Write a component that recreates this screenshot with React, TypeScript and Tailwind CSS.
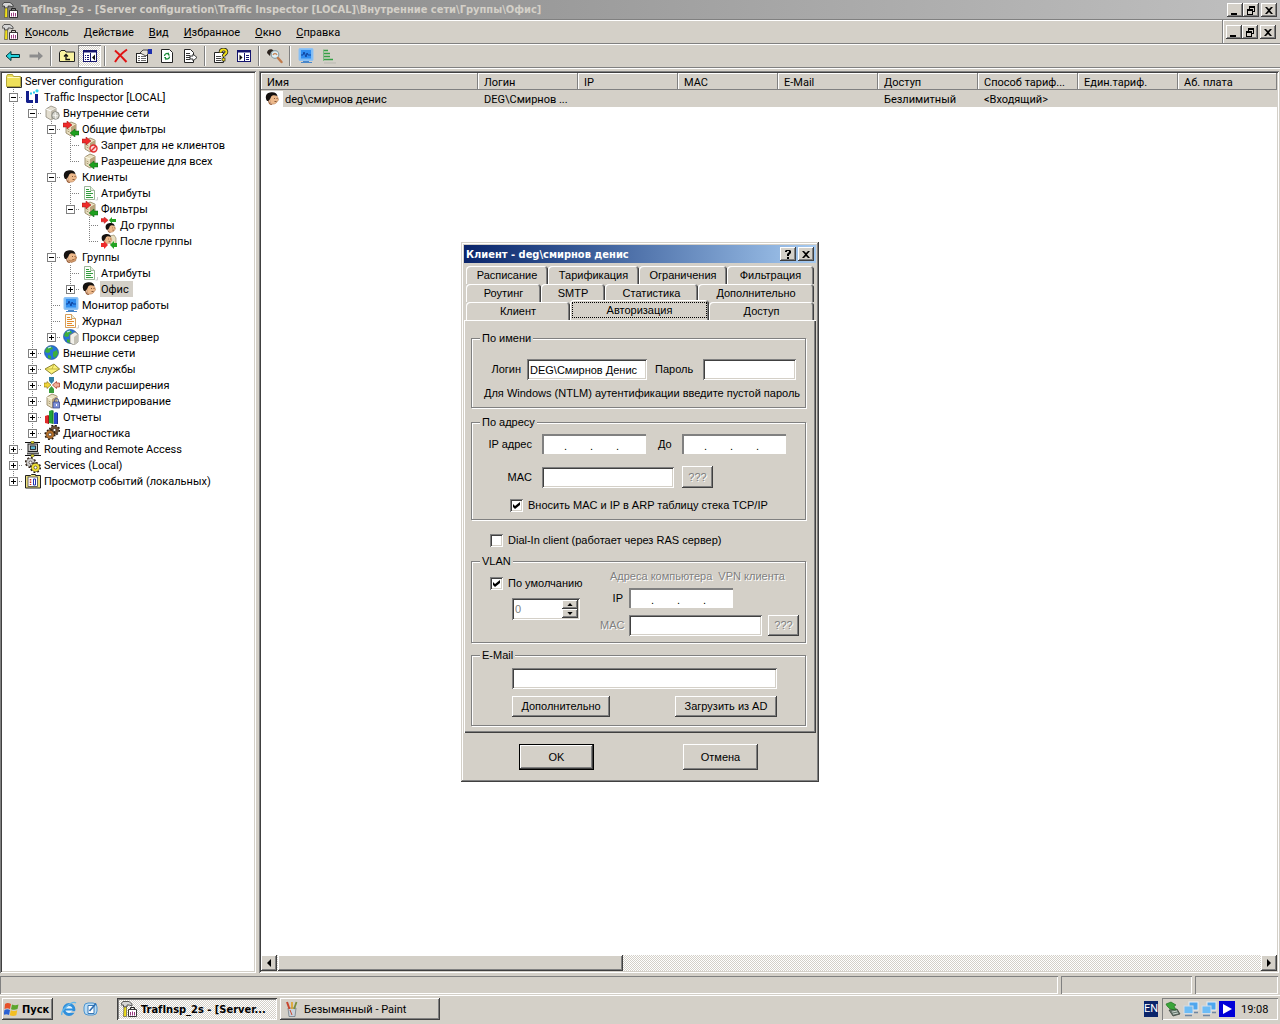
import React from "react";
import clsx from "clsx";

const raised =
  "bg-[#d4d0c8] shadow-[inset_-1px_-1px_0_#404040,inset_1px_1px_0_#fff,inset_-2px_-2px_0_#808080]";
const sunken =
  "bg-white shadow-[inset_1px_1px_0_#808080,inset_-1px_-1px_0_#fff,inset_2px_2px_0_#404040,inset_-2px_-2px_0_#d4d0c8]";
const thinSunken = "shadow-[inset_1px_1px_0_#808080,inset_-1px_-1px_0_#fff]";
const dither =
  "bg-[repeating-conic-gradient(#ffffff_0_25%,#d4d0c8_0_50%)] bg-[length:2px_2px]";
const boldFont = "font-['DejaVu_Sans_Condensed','DejaVu_Sans',sans-serif] font-bold";

/* ---------- icons ---------- */

function Svg({ children, className }: { children: React.ReactNode; className?: string }) {
  return (
    <svg viewBox="0 0 16 16" className={clsx("h-4 w-4 shrink-0", className)} aria-hidden="true">
      {children}
    </svg>
  );
}

const Box = () => (
  <>
    <path d="M3 4 8 1l5 2v9l-5 3-5-3z" fill="#e8dfc0" stroke="#8d7c58" strokeWidth=".8" />
    <path d="M3 4l5 2 5-3" fill="none" stroke="#fffbe8" />
    <path d="M8 6v9l5-3V3z" fill="#b9a37a" />
    <path d="M4.500 8l2 1M4.500 10l2 1" stroke="#9c8b66" strokeWidth=".8" />
  </>
);
const RedArrow = () => <path d="M0 2h4V0l5 4-5 4V6H0z" fill="#ee2b2b" stroke="#a31212" strokeWidth=".5" />;
const GreenArrow = () => <path d="M16 10h-4V8l-5 4 5 4v-2h4z" fill="#1fa01f" stroke="#0b5d12" strokeWidth=".5" />;
const Head = () => (
  <>
    <path d="M4 5c3-2 8-2 9 2l.500 2-1 1c-1 3-5 4-7 2z" fill="#edb98b" stroke="#b3784c" strokeWidth=".6" />
    <path d="M4.500 8c-1 3 1 5 3 5l-1 1c-2 0-3.500-2-3.500-5z" fill="#9a5d34" />
    <path d="M2 10C-.500 6 1 2 5 1.500c4-1 7 .5 7.500 3.500-3-1.500-6-1-6.500 1-.500 1-1 3-3 4z" fill="#15110f" />
    <path d="M9 7.500h1M11.500 7.500h1M9.500 10.500h2" stroke="#6b3f22" strokeWidth=".8" />
  </>
);
const Sheet = ({ stroke, line }: { stroke: string; line: string }) => (
  <>
    <path d="M2.500 1.500h6l4 4v9h-10z" fill="#fbfdf9" stroke={stroke} strokeWidth=".9" />
    <path d="M8.500 1.500v4h4" fill="#e5efe0" stroke={stroke} strokeWidth=".8" />
    <path d="M4 4.500h3M4 6.500h5M4 8.500h7M4 10.500h5M4 12.500h7" stroke={line} strokeWidth="1.200" />
    <path d="M13.500 15h2v-3" fill="none" stroke="#cfcfcf" />
  </>
);
const Screen = () => (
  <>
    <rect x="1" y="0.500" width="14" height="12" rx="1" fill="#7fbcf5" stroke="#8fc2f4" />
    <rect x="3" y="2" width="10" height="8.500" fill="#2f8df0" />
    <path d="M3 7h2l1-3 2 5 1-4 1 2h3" fill="none" stroke="#0b3c96" strokeWidth=".9" />
    <path d="M3 14.500h11M5 13.500h6" stroke="#4a86c8" />
  </>
);
const Globe = () => (
  <>
    <circle cx="7.500" cy="7.500" r="7" fill="#2673d8" stroke="#16418f" strokeWidth=".6" />
    <path d="M2 4c2-3 5-3 6-2l1 2-3 1v2l-2 1-3-1zM9 7l4-2 1 4-3 4-2-2zM4 10l3 1v3l-3-1z" fill="#3dae3b" />
    <path d="M4 3l3-1" stroke="#bfe6ff" strokeWidth="1.200" />
  </>
);
const Gear = ({ x, y, fill }: { x: number; y: number; fill: string }) => (
  <>
    <circle cx={x} cy={y} r="4.800" fill="none" stroke="#2a1c10" strokeWidth="1.600" strokeDasharray="1.800 1.960" />
    <circle cx={x} cy={y} r="4.200" fill={fill} stroke="#2a1c10" strokeWidth=".5" />
    <circle cx={x} cy={y} r="1.500" fill="#fff" stroke="#2a1c10" strokeWidth=".6" />
  </>
);

const icons: Record<string, React.ReactNode> = {
  folder: (
    <>
      <path d="M.5 3.500l1-2h5l1 2h7v10H.500z" fill="#eee05a" stroke="#b3a63a" />
      <path d="M1.500 4.500h12" stroke="#fffbc0" />
      <path d="M1 14.500h14.500V4" fill="none" stroke="#333" />
    </>
  ),
  ti: (
    <>
      <path d="M1 2h3v9h4v3H2l-1-1z" fill="#131f8c" />
      <path d="M10 5h3v9h-3z" fill="#131f8c" />
      <path d="M5 4.500h2M8 3.500h2" stroke="#28c7e8" strokeWidth="2" />
      <circle cx="12" cy="1.800" r="1.600" fill="#28d7f0" />
    </>
  ),
  net: (
    <>
      <path d="M2 4 7 1l5 2v9l-5 3-5-3z" fill="#e2ddcf" stroke="#8f8a7c" strokeWidth=".8" />
      <path d="M2 4l5 2 5-3" fill="none" stroke="#fff" />
      <path d="M7 6v9l5-3V3z" fill="#bdb8aa" />
      <circle cx="11.500" cy="10.500" r="3.800" fill="#c9c9c1" stroke="#7b7b74" strokeWidth=".8" />
      <path d="M9 10l5 1M11 7l1 7" stroke="#f6f6f2" />
    </>
  ),
  filters: <><Box /><RedArrow /><GreenArrow /></>,
  deny: (
    <>
      <Box />
      <RedArrow />
      <circle cx="11.500" cy="11.500" r="3.500" fill="#fbd7d7" stroke="#e03030" strokeWidth="1.400" />
      <path d="M9 14l5-5" stroke="#e03030" strokeWidth="1.400" />
    </>
  ),
  allow: <><Box /><GreenArrow /></>,
  head: <Head />,
  group: <><Head /><path d="M6 11c3 1 5 0 7.500-3l-1 4-4.500 1.500z" fill="#d69b6c" stroke="#9b683f" strokeWidth=".5" /></>,
  sheet: <Sheet stroke="#8fae8c" line="#2f9b3a" />,
  journal: <Sheet stroke="#d0934a" line="#e58b2b" />,
  before: (
    <>
      <g transform="scale(.8)"><RedArrow /></g>
      <path d="M15 2h-4V0L8 3l3 4V5h4z" fill="#24a324" />
      <g transform="translate(4 5) scale(.78)"><Head /></g>
    </>
  ),
  after: (
    <>
      <path d="M9 3l4-1 2 3v6H9z" fill="#e8dfc0" stroke="#8d7c58" strokeWidth=".6" />
      <g transform="scale(.8)"><Head /></g>
      <path d="M0 10h3V8l4 4-4 4v-2H0z" fill="#ee2b2b" />
      <path d="M16 10h-3V8l-4 4 4 4v-2h3z" fill="#24a324" />
    </>
  ),
  screen: <Screen />,
  proxy: (
    <>
      <Globe />
      <path d="M7 6l5-3 3 2v8l-4 3-4-2z" fill="#f1efe9" stroke="#77746c" strokeWidth=".7" />
      <path d="M11 8v8l4-3V5z" fill="#c4c1b6" />
    </>
  ),
  globe: <Globe />,
  mail: (
    <>
      <path d="M1 8l9-5 5.500 5-8 5z" fill="#fbf27a" stroke="#7e7420" strokeWidth=".9" />
      <path d="M1 8h7l2-5M8 8l7.500 0" fill="none" stroke="#b7a932" strokeWidth=".8" />
    </>
  ),
  modules: (
    <>
      <path d="M5 0h5v4L7.500 7 5 4z" fill="#2f7fa4" />
      <path d="M5 16h5v-4L7.500 9 5 12z" fill="#3c9e3c" />
      <path d="M0 6h3V4.500L7 8l-4 3.500V10H0z" fill="#f0d43a" stroke="#806c10" strokeWidth=".6" />
      <path d="M15.500 6h-3V4.500L8.500 8l4 3.500V10h3z" fill="#f0b09a" stroke="#a5301e" strokeWidth=".7" />
    </>
  ),
  admin: (
    <>
      <Box />
      <rect x="9" y="9" width="6.500" height="6" fill="#8192d8" stroke="#2c3a85" strokeWidth=".7" />
      <path d="M10.500 9V7.500a2 2 0 0 1 4 0V9" fill="none" stroke="#4a568f" />
      <path d="M12.500 11v2" stroke="#fff" />
    </>
  ),
  reports: (
    <>
      <path d="M1 7l3-1 1 1v8l-4-1z" fill="#e02a2a" />
      <path d="M5 2l3-1 1.500 1v13L5 14z" fill="#23a33a" />
      <path d="M10 4l2-1 2 1v11h-4z" fill="#2b49d2" />
      <path d="M4.500 6v9M9 1v14M13.500 4v11" stroke="#00000055" />
    </>
  ),
  diag: <><Gear x={10.500} y={5} fill="#6d5139" /><Gear x={6} y={9.500} fill="#b4702b" /></>,
  routing: (
    <>
      <path d="M0 1.500h15M0 14.500h16" stroke="#111" />
      <path d="M6 0h3v3H6zM6 13h3v3H6z" fill="#d9d021" stroke="#555" strokeWidth=".5" />
      <rect x="3" y="3" width="9.500" height="7.500" fill="#c6c6c6" stroke="#222" />
      <rect x="5.500" y="5" width="5" height="3.500" fill="#5fb4d0" stroke="#111" strokeWidth=".8" />
      <path d="M2 12.500h12" stroke="#555" strokeWidth="2" />
    </>
  ),
  services: <><Gear x={5.500} y={5.500} fill="#d0d0d0" /><Gear x={10.500} y={10.500} fill="#efe135" /></>,
  events: (
    <>
      <path d="M.5 2.500h5l1-1h4v1h5V15H.500z" fill="#efe27e" stroke="#222" />
      <rect x="3" y="4" width="9.500" height="9.500" fill="#fff" stroke="#444" strokeWidth=".8" />
      <path d="M5.500 6v6" stroke="#d02020" strokeWidth="1.500" strokeDasharray="1.500 1" />
      <path d="M8.500 6h2v6h-2z" fill="none" stroke="#2030b0" />
    </>
  ),
  mmc: (
    <>
      <path d="M0 3l2-2.500h6l3 2.500v2L8 4H6v2H2.500V4H0z" fill="#d5d5d5" stroke="#222" strokeWidth=".7" />
      <path d="M3 6h2.500v9.500H2.500z" fill="#f1e019" stroke="#444" strokeWidth=".6" />
      <path d="M7.500 8.500h8v7h-8z" fill="#fff" stroke="#222" strokeWidth=".9" />
      <path d="M9.500 8V6.500h4V8" fill="none" stroke="#222" />
      <path d="M9.500 14.500V11M11.500 14.500v-4M13.500 14.500V11" stroke="#9a3a80" />
    </>
  ),
  back: <path d="M1 8l5-4.500V6.500h8.500v3H6v3z" fill="#21d3dd" stroke="#08363a" />,
  forward: <path d="M15 8l-5-4.500V6.500H1.500v3H10v3z" fill="#8d8d8d" />,
  up: (
    <>
      <path d="M.5 4.500l1.500-2h4l1 1.500h8.500v9.500H.5z" fill="#f9f3a0" stroke="#222" />
      <path d="M11 11.500H7V7M5 8.500l2-2 2 2" fill="none" stroke="#111" strokeWidth="1.300" />
    </>
  ),
  panes: (
    <>
      <rect x="1.500" y="2.500" width="13" height="11" fill="#fff" stroke="#14146e" />
      <path d="M1 3.500h14" stroke="#14146e" strokeWidth="2" />
      <path d="M8.500 5v9" stroke="#14146e" />
      <path d="M3 7.500h4M3 9.500h4M3 11.500h4" stroke="#14146e" strokeDasharray="1 1 3" />
      <path d="M13 6.500v6L10 9.500z" fill="#111" />
    </>
  ),
  remove: <path d="M2 2.500C6 6 10 10 13.500 14M14 1.500C9 5 5 9 2 14" fill="none" stroke="#e01414" strokeWidth="2" />,
  props: (
    <>
      <rect x=".5" y="5.500" width="11" height="9" fill="#fff" stroke="#222" />
      <path d="M2 8.500h2M5 8.500h5M2 10.500h2M5 10.500h5M2 12.500h2M5 12.500h5" stroke="#444" strokeWidth=".8" />
      <path d="M4 5l3-3h5v4l-2 2-2-1-2-1z" fill="#e6e2d8" stroke="#222" strokeWidth=".8" />
      <path d="M12 1h4v5h-4z" fill="#1d2fae" />
    </>
  ),
  refresh: (
    <>
      <path d="M2.500 1.500h8l3 3v10h-11z" fill="#fff" stroke="#222" />
      <path d="M5.500 8a2.500 2.500 0 0 1 4-2M10.500 8.500a2.500 2.500 0 0 1-4 2" fill="none" stroke="#178a35" strokeWidth="1.300" />
      <path d="M9 4v3.500h2zM7 12.500V9H5z" fill="#178a35" />
    </>
  ),
  exportList: (
    <>
      <path d="M2.500 1.500h6l3 3v10h-9z" fill="#fff" stroke="#222" />
      <path d="M4 5.500h4M4 7.500h4M4 9.500h4M4 11.500h4" stroke="#333" />
      <path d="M8 8h3V6l4 3.500L11 13v-2H8z" fill="#fff" stroke="#222" strokeWidth=".9" />
    </>
  ),
  help: (
    <>
      <path d="M1.500 4.500h9v10h-9z" fill="#fff" stroke="#222" />
      <path d="M3 8.500h5M3 10.500h5M3 12.500h5" stroke="#444" />
      <path d="M7.500 4.500c0-4 6-4 6-.5 0 2-3 2-3 4.500" fill="none" stroke="#222" strokeWidth="3.600" />
      <path d="M7.500 4.500c0-4 6-4 6-.5 0 2-3 2-3 4.500" fill="none" stroke="#f1e019" strokeWidth="2" />
      <rect x="9" y="10" width="3" height="3" fill="#f1e019" stroke="#222" strokeWidth=".7" />
    </>
  ),
  panesRight: (
    <>
      <rect x="1.500" y="2.500" width="13" height="11" fill="#fff" stroke="#14146e" />
      <path d="M1 3.500h14" stroke="#14146e" strokeWidth="2" />
      <path d="M8.500 5v9" stroke="#14146e" />
      <path d="M10 7.500h3M10 9.500h3M10 11.500h3" stroke="#14146e" />
      <path d="M3.500 6.500v6L6.500 9.500z" fill="#111" />
    </>
  ),
  find: (
    <>
      <path d="M0 5c0-4 5-5 7-2l-3 1-1 4z" fill="#2a211c" />
      <circle cx="8" cy="6.500" r="3.800" fill="#dff0f6" stroke="#8aa0a8" strokeWidth="1.200" />
      <path d="M6 7c1-2 3-2 4 0" fill="none" stroke="#c98b60" strokeWidth="1.500" />
      <path d="M11 10l3.500 4" stroke="#c07a4b" strokeWidth="2.400" strokeLinecap="round" />
    </>
  ),
  greenList: (
    <>
      <path d="M3 15h12" stroke="#b9b9b1" />
      <path d="M2 2.500h5M2 5.500h7M2 8.500h7M2 11.500h10" stroke="#35a045" strokeWidth="1.600" />
      <path d="M2.500 2v11" stroke="#7dbb84" />
    </>
  ),
  windows: (
    <>
      <path d="M1 3c2-1.500 4-1 6 0L6 8C4 7 2.500 7 .5 8z" fill="#e5502a" />
      <path d="M8 3.500c2 1 4 1 6.500 0L13.500 8c-2 1-4 1-6.500.2z" fill="#5ba52d" />
      <path d="M.5 9c2-1 3.500-1 5.500 0l-1 5c-2-1-3.500-1-5.500 0z" fill="#2b62d3" />
      <path d="M6.800 9.300c2 .8 4 .8 6.500 0l-1 5c-2 1-4.500 1-6.500 0z" fill="#f2be22" />
    </>
  ),
  ie: (
    <>
      <circle cx="8" cy="8.500" r="5" fill="#e4f3fd" stroke="#2f8fdc" strokeWidth="2.800" />
      <path d="M4 8.500h9" stroke="#2f8fdc" strokeWidth="2" />
      <path d="M10 11h5" stroke="#d4d0c8" strokeWidth="1.600" />
      <path d="M1 14C-1 10 11-1 15 2" fill="none" stroke="#62b6ea" strokeWidth="1.400" />
    </>
  ),
  desktop: (
    <>
      <rect x="1" y="2" width="13" height="12" rx="4" fill="#b9dcf5" stroke="#4d94cf" />
      <path d="M5 4.500h6v8H5z" fill="#fff" stroke="#3a78b4" />
      <path d="M6.500 10L13 2.500" stroke="#2b6cb0" strokeWidth="1.600" />
    </>
  ),
  paint: (
    <>
      <path d="M4 7h8l-1 8.500H5z" fill="#c9d3dc" stroke="#66717b" strokeWidth=".7" />
      <path d="M5.500 8L3 1" stroke="#c8452e" strokeWidth="2" />
      <path d="M8 8V1" stroke="#e2a11e" strokeWidth="1.600" />
      <path d="M10 8l2.500-7" stroke="#7c8c3a" strokeWidth="1.800" />
      <path d="M6 9l2 5" stroke="#c8452e" />
    </>
  ),
  modem: (
    <>
      <path d="M4 9l8-1 3 5-7 2z" fill="#6a7a70" stroke="#2b332e" strokeWidth=".7" />
      <path d="M1 3l5-2 5 3-2 1 2 4-6-1-3-3z" fill="#3aa53a" stroke="#18661a" strokeWidth=".6" />
      <path d="M7 11l5-1M8 13l5-1" stroke="#e5ebe6" strokeWidth=".8" />
    </>
  ),
  lan: (
    <>
      <rect x="6" y="1" width="9" height="8" fill="#4ea6ee" stroke="#e5edf5" />
      <rect x="1" y="5" width="9" height="7.500" fill="#6cbcf6" stroke="#d3dce6" />
      <path d="M2 14.500h7M11 11.500h4" stroke="#6f87a3" strokeWidth="1.600" />
    </>
  ),
  play: (
    <>
      <rect width="16" height="16" fill="#0000d8" />
      <path d="M4 3l9 5-9 5z" fill="#fff" />
    </>
  ),
};

function Icon({ name, className }: { name: string; className?: string }) {
  return <Svg className={className}>{icons[name]}</Svg>;
}

/* ---------- window buttons ---------- */

const glyphs: Record<string, React.ReactNode> = {
  min: <path d="M3 9h6v2H3z" />,
  restore: <path d="M5 2h6v6H9v3H3V5h2zM6 4v1h3v2h1V4zM4 7v3h4V7z" fillRule="evenodd" />,
  close: <path d="M3 3h2l2 2 2-2h2L8 6.500 11 10H9L7 8l-2 2H3l3-3.500z" />,
  help: <path d="M4 4V3l1-1h4l1 1v2L8 7v1H6V6l2-2V3H6v1zM6 9h2v2H6z" />,
};

function WinButton({ kind, label }: { kind: string; label: string }) {
  return (
    <button aria-label={label} className={clsx(raised, "flex h-[14px] w-4 items-center justify-center")}>
      <svg viewBox="0 0 14 12" className="h-3 w-[14px]" aria-hidden="true">
        {glyphs[kind]}
      </svg>
    </button>
  );
}

function WindowControls() {
  return (
    <div className="flex">
      <WinButton kind="min" label="Свернуть" />
      <WinButton kind="restore" label="Восстановить" />
      <span className="w-0.5" />
      <WinButton kind="close" label="Закрыть" />
    </div>
  );
}

/* ---------- tree ---------- */

type Node = {
  label: string;
  icon: string;
  closed?: boolean;
  selected?: boolean;
  children?: Node[];
};

const tree: Node[] = [
  {
    label: "Traffic Inspector [LOCAL]",
    icon: "ti",
    children: [
      {
        label: "Внутренние сети",
        icon: "net",
        children: [
          {
            label: "Общие фильтры",
            icon: "filters",
            children: [
              { label: "Запрет для не клиентов", icon: "deny" },
              { label: "Разрешение для всех", icon: "allow" },
            ],
          },
          {
            label: "Клиенты",
            icon: "head",
            children: [
              { label: "Атрибуты", icon: "sheet" },
              {
                label: "Фильтры",
                icon: "filters",
                children: [
                  { label: "До группы", icon: "before" },
                  { label: "После группы", icon: "after" },
                ],
              },
            ],
          },
          {
            label: "Группы",
            icon: "group",
            children: [
              { label: "Атрибуты", icon: "sheet" },
              { label: "Офис", icon: "head", closed: true, selected: true },
            ],
          },
          { label: "Монитор работы", icon: "screen" },
          { label: "Журнал", icon: "journal" },
          { label: "Прокси сервер", icon: "proxy", closed: true },
        ],
      },
      { label: "Внешние сети", icon: "globe", closed: true },
      { label: "SMTP службы", icon: "mail", closed: true },
      { label: "Модули расширения", icon: "modules", closed: true },
      { label: "Администрирование", icon: "admin", closed: true },
      { label: "Отчеты", icon: "reports", closed: true },
      { label: "Диагностика", icon: "diag", closed: true },
    ],
  },
  { label: "Routing and Remote Access", icon: "routing", closed: true },
  { label: "Services (Local)", icon: "services", closed: true },
  { label: "Просмотр событий (локальных)", icon: "events", closed: true },
];

function Branch({ node, last }: { node: Node; last: boolean }) {
  const open = !!node.children;
  return (
    <svg viewBox="0 0 19 16" className="h-4 w-[19px] shrink-0" aria-hidden="true">
      <path d={last ? "M9.500 0v8" : "M9.500 0v16"} stroke="#808080" strokeDasharray="1 1" />
      <path d="M9 8.500h10" stroke="#808080" strokeDasharray="1 1" />
      {(open || node.closed) && (
        <>
          <rect x="5.500" y="4.500" width="8" height="8" fill="#fff" stroke="#808080" />
          <path d={open ? "M7 8.500h5" : "M7 8.500h5M9.500 6v5"} stroke="#000" />
        </>
      )}
    </svg>
  );
}

function TreeItem({ node, last, guides }: { node: Node; last: boolean; guides: boolean[] }) {
  return (
    <li role="treeitem" aria-selected={!!node.selected} aria-expanded={node.children ? true : undefined}>
      <div className="flex h-4 items-center whitespace-nowrap">
        {guides.map((on, i) => (
          <svg key={i} viewBox="0 0 19 16" className="h-4 w-[19px] shrink-0" aria-hidden="true">
            {on && <path d="M9.500 0v16" stroke="#808080" strokeDasharray="1 1" />}
          </svg>
        ))}
        <Branch node={node} last={last} />
        <Icon name={node.icon} className="ml-0.5" />
        <span className={clsx("ml-0.5 h-4 px-px leading-[18px]", node.selected && "bg-[#d4d0c8] pr-1")}>
          {node.label}
        </span>
      </div>
      {node.children && (
        <ul role="group">
          {node.children.map((child, i) => (
            <TreeItem
              key={child.label}
              node={child}
              last={i === node.children!.length - 1}
              guides={[...guides, !last]}
            />
          ))}
        </ul>
      )}
    </li>
  );
}

function TreePane() {
  return (
    <nav className={clsx(sunken, "w-64 shrink-0 overflow-hidden p-0.5")}>
      <ul role="tree" className="pl-0.5">
        <li role="treeitem" aria-expanded="true">
          <div className="flex h-4 items-center">
            <Icon name="folder" className="ml-0.5" />
            <span className="ml-0.5 h-4 px-px leading-[18px]">Server configuration</span>
          </div>
          <ul role="group">
            {tree.map((node, i) => (
              <TreeItem key={node.label} node={node} last={i === tree.length - 1} guides={[]} />
            ))}
          </ul>
        </li>
      </ul>
    </nav>
  );
}

/* ---------- list ---------- */

const columns = ["Имя", "Логин", "IP", "MAC", "E-Mail", "Доступ", "Способ тариф...", "Един.тариф.", "Аб. плата"];
const row = ["DEG\\Смирнов ...", "", "", "", "Безлимитный", "<Входящий>", "", ""];

function ListPane() {
  return (
    <main className={clsx(sunken, "flex min-w-0 flex-1 flex-col p-0.5")}>
      <div className="min-h-0 flex-1 overflow-hidden">
        <table className="w-full table-fixed border-collapse text-left">
          <colgroup>
            <col className="w-[217px]" />
            {row.slice(1).map((_, i) => (
              <col key={i} className="w-[100px]" />
            ))}
            <col />
          </colgroup>
          <thead>
            <tr>
              {columns.map((c) => (
                <th
                  key={c}
                  className="h-[17px] truncate bg-[#d4d0c8] p-0 pl-1.5 pt-0.5 font-normal leading-[15px] shadow-[inset_-1px_-1px_0_#808080,inset_1px_1px_0_#fff]"
                >
                  {c}
                </th>
              ))}
            </tr>
          </thead>
          <tbody>
            <tr className="bg-[#d4d0c8]">
              <td className="h-[17px] p-0">
                <div className="flex items-center">
                  <span className="bg-white pl-1 pr-0.5">
                    <Icon name="head" />
                  </span>
                  <span className="h-4 pl-0.5 leading-[18px]">deg\смирнов денис</span>
                </div>
              </td>
              {row.map((c, i) => (
                <td key={i} className="truncate p-0 pl-1.5 pt-0.5 leading-[15px]">
                  {c}
                </td>
              ))}
            </tr>
          </tbody>
        </table>
      </div>
      <div className={clsx(dither, "flex h-4")}>
        <button aria-label="Влево" className={clsx(raised, "flex w-4 items-center justify-center")}>
          <svg viewBox="0 0 4 8" className="h-2 w-1" aria-hidden="true"><path d="M4 0v8L0 4z" /></svg>
        </button>
        <div className={clsx(raised, "ml-px w-[345px]")} />
        <button aria-label="Вправо" className={clsx(raised, "ml-auto flex w-4 items-center justify-center")}>
          <svg viewBox="0 0 4 8" className="h-2 w-1" aria-hidden="true"><path d="M0 0v8l4-4z" /></svg>
        </button>
      </div>
    </main>
  );
}

/* ---------- top bars ---------- */

const menu = ["Консоль", "Действие", "Вид", "Избранное", "Окно", "Справка"];

const tools: [string, string][][] = [
  [["back", "Назад"], ["forward", "Вперед"]],
  [["up", "Вверх"], ["panes", "Дерево консоли"]],
  [["remove", "Удалить"], ["props", "Свойства"], ["refresh", "Обновить"], ["exportList", "Экспорт"]],
  [["help", "Справка"], ["panesRight", "Панель действий"]],
  [["find", "Найти"]],
  [["screen", "Монитор"], ["greenList", "Атрибуты"]],
];

function Toolbar() {
  return (
    <div className="flex h-6 items-center border-b border-[#808080] pl-px shadow-[inset_0_1px_0_#fff,0_1px_0_#fff]">
      {tools.map((group, g) => (
        <div key={g} className="flex items-center">
          {g > 0 && (
            <span className="flex w-2 justify-center">
              <span className="h-5 w-0.5 border-l border-r border-l-[#808080] border-r-white" />
            </span>
          )}
          {group.map(([icon, label]) => (
            <button
              key={icon}
              aria-label={label}
              className={clsx(
                "flex h-[22px] w-[23px] items-center justify-center",
                icon === "panes" && [dither, thinSunken],
              )}
            >
              <Icon name={icon} />
            </button>
          ))}
        </div>
      ))}
    </div>
  );
}

/* ---------- dialog ---------- */

function Group({ title, className, children }: { title: string; className?: string; children: React.ReactNode }) {
  return (
    <fieldset
      className={clsx(
        "border border-[#808080] shadow-[1px_1px_0_#fff,inset_1px_1px_0_#fff]",
        className,
      )}
    >
      <legend className="ml-2 h-[14px] bg-[#d4d0c8] px-0.5 leading-[14px]">{title}</legend>
      {children}
    </fieldset>
  );
}

function IpField({ id, label }: { id: string; label: string }) {
  return (
    <div
      role="group"
      aria-label={label}
      className="flex h-5 w-[104px] items-end bg-white pb-px pl-0.5 shadow-[inset_2px_2px_0_#808080]"
    >
      <input id={id} aria-label={label + " 1"} className="w-5 outline-none" />
      {[2, 3, 4].map((n) => (
        <React.Fragment key={n}>
          <span className="w-0.5">.</span>
          <input aria-label={label + " " + n} className="w-6 min-w-0 outline-none" />
        </React.Fragment>
      ))}
    </div>
  );
}

function Check({ id, label, checked }: { id: string; label: string; checked?: boolean }) {
  return (
    <div className="flex items-center">
      <span className="relative flex">
        <input
          id={id}
          type="checkbox"
          defaultChecked={checked}
          className={clsx(sunken, "peer h-[13px] w-[13px] appearance-none")}
        />
        <svg
          viewBox="0 0 13 13"
          className="pointer-events-none absolute inset-0 hidden h-[13px] w-[13px] peer-checked:block"
          aria-hidden="true"
        >
          <path d="M3 5l2 2 5-4v3L5 10 3 8z" />
        </svg>
      </span>
      <label htmlFor={id} className="pl-[5px]">
        {label}
      </label>
    </div>
  );
}

const field = clsx(sunken, "h-[21px] px-[3px] outline-none");
const grayed = "text-[#808080] [text-shadow:1px_1px_0_#fff]";

const tabRows: [string, string][][] = [
  [["Расписание", "w-[82px]"], ["Тарификация", "w-[91px]"], ["Ограничения", "w-[88px]"], ["Фильтрация", "flex-1"]],
  [["Роутинг", "w-[75px]"], ["SMTP", "w-[64px]"], ["Статистика", "w-[93px]"], ["Дополнительно", "flex-1"]],
  [["Клиент", "w-[104px]"], ["Авторизация", "w-[139px]"], ["Доступ", "flex-1"]],
];

function Tabs() {
  return (
    <div role="tablist" className="mx-0.5 pt-[3px]">
      {tabRows.map((tabs, r) => (
        <div key={r} className="flex h-[18px] items-end">
          {tabs.map(([label, width]) => {
            const active = label === "Авторизация";
            return (
              <button
                key={label}
                role="tab"
                aria-selected={active}
                className={clsx(
                  width,
                  "rounded-t-sm bg-[#d4d0c8] shadow-[inset_1px_1px_0_#fff,inset_-1px_0_0_#404040,inset_-2px_0_0_#808080]",
                  active ? "relative h-5 p-0.5" : "h-[18px]",
                )}
              >
                {active ? (
                  <span className="block h-4 border border-dotted border-black leading-[14px]">{label}</span>
                ) : (
                  label
                )}
              </button>
            );
          })}
        </div>
      ))}
    </div>
  );
}

function ClientDialog() {
  return (
    <div className="pointer-events-none fixed inset-0 flex items-center justify-center">
      <section
        role="dialog"
        aria-label="Клиент"
        className="pointer-events-auto w-[358px] bg-[#d4d0c8] p-[3px] pb-3 font-['Liberation_Sans',sans-serif] shadow-[inset_-1px_-1px_0_#404040,inset_1px_1px_0_#d4d0c8,inset_-2px_-2px_0_#808080,inset_2px_2px_0_#fff]"
      >
        <header
          className={clsx(
            boldFont,
            "flex h-[18px] items-center bg-linear-to-r from-[#0a246a] to-[#a6caf0] px-0.5 text-white",
          )}
        >
          <h2 className="flex-1">Клиент - deg\смирнов денис</h2>
          <WinButton kind="help" label="Справка" />
          <span className="w-0.5" />
          <WinButton kind="close" label="Закрыть" />
        </header>

        <Tabs />

        <div
          role="tabpanel"
          className="pb-[7px] pl-[7px] pr-2.5 pt-[11px] shadow-[inset_1px_1px_0_#fff,inset_-1px_-1px_0_#404040,inset_-2px_-2px_0_#808080]"
        >
          <Group title="По имени" className="pb-[7px]">
            <div className="flex items-center pt-[14px]">
              <label htmlFor="login" className="w-[55px] pr-1.5 text-right">Логин</label>
              <input id="login" defaultValue="DEG\Смирнов Денис" className={clsx(field, "w-[120px]")} />
              <label htmlFor="password" className="w-14 pl-2">Пароль</label>
              <input id="password" type="password" className={clsx(field, "w-[93px]")} />
            </div>
            <p className="whitespace-nowrap pl-3 pt-1.5 leading-[14px]">
              Для Windows (NTLM) аутентификации введите пустой пароль
            </p>
          </Group>

          <Group title="По адресу" className="mt-[7px] pb-[7px]">
            <div className="flex items-center pt-[5px]">
              <label htmlFor="ip-from" className="w-[70px] pr-2.5 text-right">IP адрес</label>
              <IpField id="ip-from" label="IP адрес" />
              <label htmlFor="ip-to" className="w-9 pl-3">До</label>
              <IpField id="ip-to" label="До" />
            </div>
            <div className="flex items-center pt-3">
              <label htmlFor="mac" className="w-[70px] pr-2.5 text-right">MAC</label>
              <input id="mac" className={clsx(field, "w-[132px]")} />
              <button disabled className={clsx(raised, grayed, "ml-2 h-[22px] w-[31px]")}>???</button>
            </div>
            <div className="pl-[38px] pt-[11px]">
              <Check id="arp" label="Вносить MAC и IP в ARP таблицу стека TCP/IP" checked />
            </div>
          </Group>

          <div className="pl-[19px] pt-[14px]">
            <Check id="dialin" label="Dial-In client (работает через RAS сервер)" />
          </div>

          <Group title="VLAN" className="mt-[7px] pb-1.5">
            <div className="flex pl-[18px]">
              <div className="w-[110px] pt-[9px]">
                <Check id="default" label="По умолчанию" checked />
                <div className={clsx(sunken, "ml-[22px] mt-2 flex h-[22px] w-[68px] p-0.5")}>
                  <input aria-label="VLAN" disabled defaultValue="0" className="min-w-0 flex-1 pl-px text-[#808080]" />
                  <div className="flex w-4 flex-col">
                    <button aria-label="Больше" className={clsx(raised, "flex flex-1 items-center justify-center")}>
                      <svg viewBox="0 0 7 4" className="h-[3px] w-[6px]" aria-hidden="true"><path d="M0 4h7L3.500 0z" /></svg>
                    </button>
                    <button aria-label="Меньше" className={clsx(raised, "flex flex-1 items-center justify-center")}>
                      <svg viewBox="0 0 7 4" className="h-[3px] w-[6px]" aria-hidden="true"><path d="M0 0h7L3.500 4z" /></svg>
                    </button>
                  </div>
                </div>
              </div>
              <div>
                <p className={clsx(grayed, "whitespace-pre pl-2.5 pt-px leading-[14px]")}>Адреса компьютера  VPN клиента</p>
                <div className="flex items-center pt-[5px]">
                  <label htmlFor="vpn-ip" className="w-[29px] pr-1.5 text-right">IP</label>
                  <IpField id="vpn-ip" label="IP" />
                </div>
                <div className="flex items-center pt-[7px]">
                  <label htmlFor="vpn-mac" className={clsx(grayed, "w-[29px] pr-1.5 text-right")}>MAC</label>
                  <input id="vpn-mac" disabled className={clsx(field, "w-[133px]")} />
                  <button disabled className={clsx(raised, grayed, "ml-1.5 h-[21px] w-[31px]")}>???</button>
                </div>
              </div>
            </div>
          </Group>

          <Group title="E-Mail" className="mt-[5px] pb-2">
            <div className="pl-10 pr-7 pt-1.5">
              <input aria-label="E-Mail" className={clsx(field, "w-full")} />
              <div className="flex justify-between pt-[7px]">
                <button className={clsx(raised, "h-[21px] w-[98px]")}>Дополнительно</button>
                <button className={clsx(raised, "h-[21px] w-[102px]")}>Загрузить из AD</button>
              </div>
            </div>
          </Group>
        </div>

        <footer className="flex justify-between pl-[55px] pr-[58px] pt-[11px]">
          <button className="h-[26px] w-[75px] border border-black shadow-[inset_-1px_-1px_0_#404040,inset_1px_1px_0_#fff,inset_-2px_-2px_0_#808080]">
            OK
          </button>
          <button className={clsx(raised, "h-[26px] w-[75px]")}>Отмена</button>
        </footer>
      </section>
    </div>
  );
}

/* ---------- taskbar ---------- */

function Taskbar() {
  return (
    <footer className="flex h-[30px] items-center px-0.5 shadow-[inset_0_1px_0_#d4d0c8,inset_0_2px_0_#fff]">
      <button className={clsx(raised, boldFont, "flex h-[22px] w-[51px] items-center gap-0.5 pl-0.5")}>
        <Icon name="windows" />
        Пуск
      </button>
      <button aria-label="Internet Explorer" className="ml-2"><Icon name="ie" /></button>
      <button aria-label="Рабочий стол" className="ml-1.5"><Icon name="desktop" /></button>
      <button
        className={clsx(
          dither,
          boldFont,
          "ml-[18px] flex h-[22px] w-40 items-center gap-1 whitespace-nowrap pl-1 shadow-[inset_1px_1px_0_#404040,inset_-1px_-1px_0_#fff,inset_2px_2px_0_#808080]",
        )}
      >
        <Icon name="mmc" />
        TrafInsp_2s - [Server...
      </button>
      <button className={clsx(raised, "ml-[3px] flex h-[22px] w-40 items-center gap-1 pl-1")}>
        <Icon name="paint" />
        Безымянный - Paint
      </button>
      <span className="ml-auto bg-[#0a246a] leading-4 text-white">EN</span>
      <div className={clsx(thinSunken, "ml-1 flex h-[22px] w-[116px] items-center gap-0.5 pl-[3px]")}>
        <Icon name="modem" />
        <Icon name="lan" />
        <Icon name="lan" />
        <Icon name="play" />
        <time className="pl-1">19:08</time>
      </div>
    </footer>
  );
}

function App() {
  return (
    <div className="flex h-screen flex-col overflow-hidden bg-[#d4d0c8] font-['Roboto',sans-serif] text-[11px] leading-[13px] text-black">
      <header className="flex h-[19px] items-center bg-linear-to-r from-[#808080] to-[#c0c0c0] pl-0.5 pr-[3px]">
        <Icon name="mmc" />
        <h1 className={clsx(boldFont, "flex-1 truncate pl-[3px] text-[#d4d0c8]")}>
          TrafInsp_2s - [Server configuration\Traffic Inspector [LOCAL]\Внутренние сети\Группы\Офис]
        </h1>
        <WindowControls />
      </header>

      <div className="flex h-[25px] items-center border-b border-t border-[#808080] pl-0.5 pr-1 shadow-[inset_0_1px_0_#fff]">
        <Icon name="mmc" />
        <nav className="flex flex-1 gap-[15px] pl-[7px] pt-0.5">
          {menu.map((m) => (
            <button key={m} className="leading-[15px]">
              <span className="underline">{m[0]}</span>
              {m.slice(1)}
            </button>
          ))}
        </nav>
        <span className="mr-0.5 h-[23px] w-0.5 border-l border-r border-l-[#808080] border-r-white" />
        <WindowControls />
      </div>
      <Toolbar />

      <div className="flex min-h-0 flex-1 gap-[3px] pb-[3px] pr-px pt-[3px]">
        <TreePane />
        <ListPane />
      </div>

      <div className="flex h-[18px] gap-[3px] pr-0.5">
        <div className={clsx(thinSunken, "flex-1")} />
        <div className={clsx(thinSunken, "w-[131px]")} />
        <div className={clsx(thinSunken, "w-[83px]")} />
      </div>
      <Taskbar />
      <ClientDialog />
    </div>
  );
}

export default App;
